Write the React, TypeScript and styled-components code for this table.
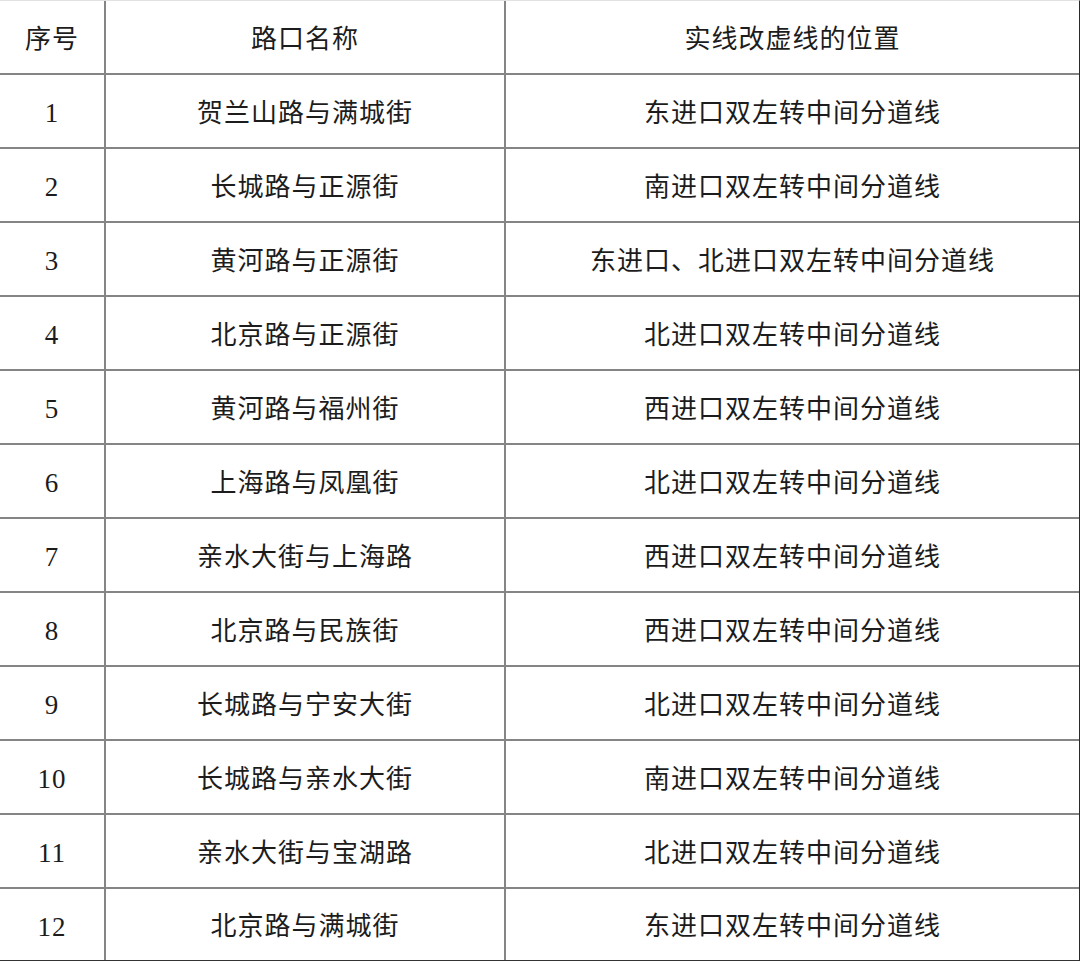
import styled, { createGlobalStyle } from "styled-components";

const GlobalStyle = createGlobalStyle`
  html, body {
    margin: 0;
    padding: 0;
    background: #ffffff;
  }
  * {
    box-sizing: border-box;
  }
`;

interface RowData {
  no: number;
  name: string;
  place: string;
}

const rows: RowData[] = [
  { no: 1, name: "贺兰山路与满城街", place: "东进口双左转中间分道线" },
  { no: 2, name: "长城路与正源街", place: "南进口双左转中间分道线" },
  { no: 3, name: "黄河路与正源街", place: "东进口、北进口双左转中间分道线" },
  { no: 4, name: "北京路与正源街", place: "北进口双左转中间分道线" },
  { no: 5, name: "黄河路与福州街", place: "西进口双左转中间分道线" },
  { no: 6, name: "上海路与凤凰街", place: "北进口双左转中间分道线" },
  { no: 7, name: "亲水大街与上海路", place: "西进口双左转中间分道线" },
  { no: 8, name: "北京路与民族街", place: "西进口双左转中间分道线" },
  { no: 9, name: "长城路与宁安大街", place: "北进口双左转中间分道线" },
  { no: 10, name: "长城路与亲水大街", place: "南进口双左转中间分道线" },
  { no: 11, name: "亲水大街与宝湖路", place: "北进口双左转中间分道线" },
  { no: 12, name: "北京路与满城街", place: "东进口双左转中间分道线" },
];

export default function App() {
  return (
    <>
      <GlobalStyle />
      <Table>
        <Row $header>
          <Cell>序号</Cell>
          <Cell>路口名称</Cell>
          <Cell $last>实线改虚线的位置</Cell>
        </Row>
        {rows.map((r, i) => (
          <Row key={r.no} $final={i === rows.length - 1}>
            <Cell $num>{r.no}</Cell>
            <Cell>{r.name}</Cell>
            <Cell $last>{r.place}</Cell>
          </Row>
        ))}
      </Table>
    </>
  );
}

const Table = styled.div`
  width: 1080px;
  border-top: 1px solid #e2e2e2;
  border-right: 1px solid #2a2a2a;
  font-family: "Liberation Serif", "Noto Sans CJK SC", serif;
  color: #1c1c1c;
`;

const Row = styled.div<{ $header?: boolean; $final?: boolean }>`
  display: grid;
  grid-template-columns: 106px 400px 1fr;
  height: ${(p) => (p.$final ? "73px" : "74px")};
  border-bottom: 2px solid ${(p) => (p.$final ? "#333333" : "#858585")};
`;

const Cell = styled.div<{ $last?: boolean; $num?: boolean }>`
  display: flex;
  align-items: center;
  justify-content: center;
  border-right: ${(p) => (p.$last ? "none" : "2px solid #858585")};
  font-size: ${(p) => (p.$num ? "27px" : "26px")};
  letter-spacing: 1px;
  line-height: 1;
  padding-top: 5px;
  white-space: nowrap;
`;
